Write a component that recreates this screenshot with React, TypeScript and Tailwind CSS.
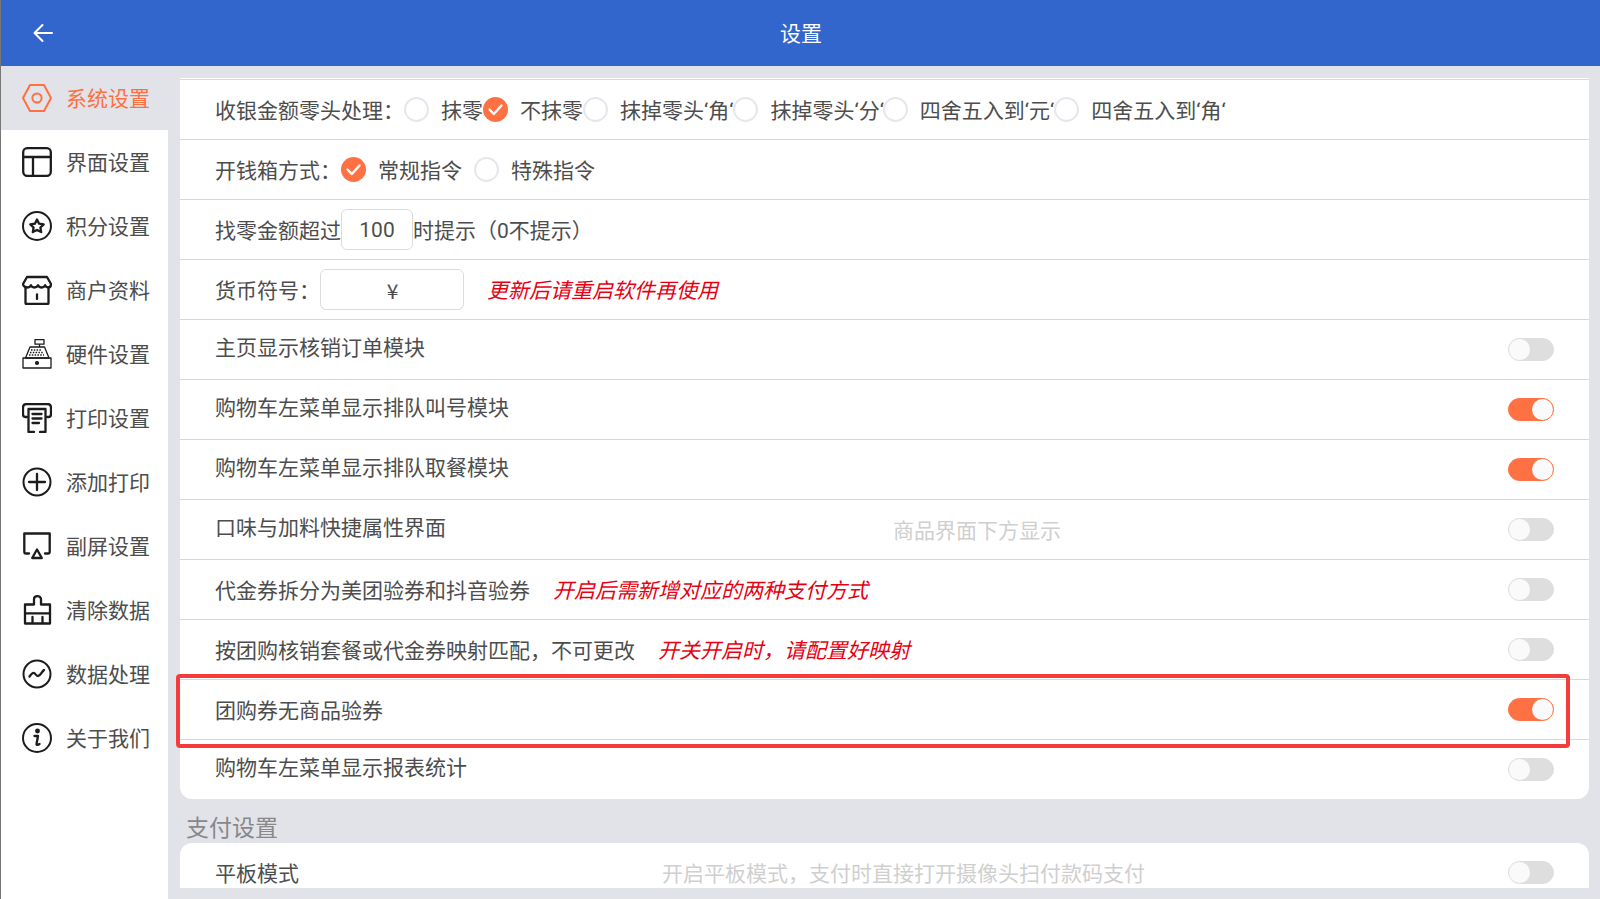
import type { ReactNode } from 'react'

const ink = { fill: 'none', stroke: '#1c1c1c', strokeWidth: 2.3, strokeLinecap: 'round', strokeLinejoin: 'round' } as const

const icons: Record<string, ReactNode> = {
  system: (
    <g fill="none" stroke="#ff7043" strokeWidth="2" strokeLinejoin="round">
      <path d="M8 2h14l7 13-7 13H8L1 15z" />
      <circle cx="15" cy="15" r="4.600" />
    </g>
  ),
  layout: (
    <g {...ink}>
      <rect x="1.200" y="1.200" width="27.600" height="27.600" rx="4" />
      <path d="M1.200 10h27.600M11 10v18.800" />
    </g>
  ),
  star: (
    <g {...ink}>
      <circle cx="15" cy="15" r="14" strokeWidth="2" />
      <path d="M15 8.500l2.100 4.200 4.600.6-3.300 3.200.8 4.600-4.200-2.200-4.200 2.200.8-4.600-3.300-3.200 4.600-.6z" />
    </g>
  ),
  shop: (
    <g {...ink}>
      <path d="M5 2h20l4 7c0 2-1.200 3.500-2.800 3.500-1.500 0-2.600-1-3.100-2.300-.5 1.300-1.700 2.300-3.300 2.300s-3.100-1-3.800-2.300c-.7 1.300-2.200 2.300-3.800 2.300s-2.800-1-3.300-2.300c-.5 1.300-1.600 2.300-3.100 2.300C3.200 12.500 1 11 1 9z" />
      <path d="M3.500 12.500V28c0 .6.400 1 1 1h21c.6 0 1-.4 1-1V12.500" />
      <path d="M15 19.500v4.500" />
    </g>
  ),
  register: (
    <g fill="none" stroke="#1c1c1c" strokeWidth="1.300" strokeLinejoin="round">
      <rect x="13" y="0.700" width="9" height="4.500" />
      <path d="M17.500 5.200V8M8 8h14.500l4.500 11H3.500z" />
      <rect x="1" y="19" width="28" height="10" />
      <path d="M9 11h11M8 13.500h13M7 16h15" strokeDasharray="1.500 1.300" />
      <circle cx="15" cy="24" r="1.400" fill="#1c1c1c" />
    </g>
  ),
  printer: (
    <g {...ink}>
      <path d="M5 14H3.500C1.800 14 1 13 1 11V4.500C1 2.300 2.300 1 4.500 1h21C27.700 1 29 2.300 29 4.500V11c0 2-.8 3-2.500 3H25" />
      <path d="M12 29H6.500V6h17v23H18" />
      <path d="M10.500 11h9M10.500 15.500h9M10.500 20h6.500" />
    </g>
  ),
  plus: (
    <g {...ink}>
      <circle cx="15" cy="15" r="13.500" strokeWidth="2" />
      <path d="M15 7v16M7 15h16" />
    </g>
  ),
  cast: (
    <g {...ink}>
      <path d="M7 22.500H4c-1 0-1.700-.7-1.700-1.700V2.500h25.400v18.300c0 1-.7 1.700-1.700 1.700h-3" />
      <path d="M15 18.500l4.800 8.500h-9.600z" />
    </g>
  ),
  broom: (
    <g {...ink}>
      <path d="M15.500 1.200c-1.800 0-3.500 1-3.500 3V9.500H3v8.800h25V9.500h-9V4.200c0-2-1.700-3-3.500-3z" />
      <path d="M3 18.300V28.500h25V18.300M10.500 22v6.500M20.500 22v6.500" />
    </g>
  ),
  chart: (
    <g {...ink}>
      <circle cx="15" cy="15" r="13.500" strokeWidth="2" />
      <path d="M7.500 17.500c1.500-2 3-4 4.500-3.500s2 3 4 3c2.500 0 3-3.500 6-6" />
    </g>
  ),
  info: (
    <g {...ink}>
      <circle cx="15" cy="15" r="14" strokeWidth="2" />
      <circle cx="15.500" cy="8" r="1.300" fill="#1c1c1c" />
      <path d="M12.500 13h3.500l-1.500 8c-.2 1.200 1.500 1.200 3 0" />
    </g>
  ),
}

const menu = [
  { key: 'system', label: '系统设置', active: true },
  { key: 'layout', label: '界面设置' },
  { key: 'star', label: '积分设置' },
  { key: 'shop', label: '商户资料' },
  { key: 'register', label: '硬件设置' },
  { key: 'printer', label: '打印设置' },
  { key: 'plus', label: '添加打印' },
  { key: 'cast', label: '副屏设置' },
  { key: 'broom', label: '清除数据' },
  { key: 'chart', label: '数据处理' },
  { key: 'info', label: '关于我们' },
]

function Radio({ checked = false, className = '' }: { checked?: boolean; className?: string }) {
  if (checked) {
    return (
      <svg viewBox="0 0 25 25" className={`h-[25px] w-[25px] shrink-0 ${className}`}>
        <circle cx="12.500" cy="12.500" r="12.500" fill="#ff7043" />
        <path d="M6.500 12.500l4.300 4.500 7.700-8.500" fill="none" stroke="#fff" strokeWidth="2.400" strokeLinecap="round" strokeLinejoin="round" />
      </svg>
    )
  }
  return <span className={`h-[25px] w-[25px] shrink-0 rounded-full border-2 border-[#e6e7ec] bg-white ${className}`} />
}

function Toggle({ on = false }: { on?: boolean }) {
  return (
    <span className={`ml-auto mr-[35px] flex h-[23px] w-[46px] shrink-0 rounded-full ${on ? 'justify-end border border-[#ff7043] bg-[#ff7043]' : 'border border-[#dedede] bg-[#dedede]'}`}>
      <span className="h-[21px] w-[21px] rounded-full bg-[#fafafa]" />
    </span>
  )
}

function Row({ children, last = false }: { children: ReactNode; last?: boolean }) {
  return (
    <div className={`flex items-center pl-[35px] ${last ? 'h-[59px]' : 'h-[60px] border-b border-[#d8d8d8]'}`}>
      {children}
    </div>
  )
}

function Red({ children, className = '' }: { children: ReactNode; className?: string }) {
  return <span className={`pt-[4px] italic text-[#e60012] ${className}`}>{children}</span>
}

const low = 'pt-[4px]'
const high = 'pb-[2px]'

export default function App() {
  return (
    <div className="relative h-[899px] overflow-hidden bg-[#e2e3e8] font-['Roboto','Noto_Sans_CJK_SC',sans-serif] text-[21px] leading-none text-[#4d4d4d]">
      <header className="relative flex h-[66px] items-center justify-center bg-[#3366cc] pl-[2px] pt-[2px] text-white">
        <svg viewBox="0 0 20 20" className="absolute left-[33px] top-[23px] h-[20px] w-[20px]" fill="none" stroke="#fff" strokeWidth="2" strokeLinecap="round" strokeLinejoin="round">
          <path d="M19 10H2M9.500 2L1.500 10l8 8" />
        </svg>
        设置
      </header>

      <div className="flex h-[833px]">
        <aside className="ml-px w-[167px] shrink-0 bg-white">
          {menu.map((m) => (
            <div key={m.key} className={`flex h-[64px] items-center gap-[14px] pl-[21px] ${m.active ? 'bg-[#e2e3e8] text-[#ff7043]' : ''}`}>
              <svg viewBox="0 0 30 30" className="h-[30px] w-[30px] shrink-0">{icons[m.key]}</svg>
              <span className="pt-[2px]">{m.label}</span>
            </div>
          ))}
        </aside>

        <main className="ml-[12px] mr-[11px] flex-1">
          <section className="mt-[12px] rounded-b-[12px] border-t border-white bg-white">
            <div className="border-t border-[#d8d8d8]" />
            <Row>
              <span className={low}>收银金额零头处理：</span>
              <Radio />
              <span className={`ml-[12px] ${low}`}>抹零</span>
              <Radio checked />
              <span className={`ml-[12px] ${low}`}>不抹零</span>
              <Radio />
              <span className={`ml-[12px] ${low}`}>抹掉零头‘角‘</span>
              <Radio />
              <span className={`ml-[12px] ${low}`}>抹掉零头‘分‘</span>
              <Radio className="-ml-px" />
              <span className={`ml-[12px] ${low}`}>四舍五入到‘元‘</span>
              <Radio />
              <span className={`ml-[12px] ${low}`}>四舍五入到‘角‘</span>
            </Row>
            <Row>
              <span className={low}>开钱箱方式：</span>
              <Radio checked />
              <span className={`ml-[12px] ${low}`}>常规指令</span>
              <Radio className="ml-[12px]" />
              <span className={`ml-[12px] ${low}`}>特殊指令</span>
            </Row>
            <Row>
              <span className={low}>找零金额超过</span>
              <span className="flex h-[41px] w-[72px] items-center justify-center rounded-[6px] border border-[#dcdcdc] pt-[2px]">100</span>
              <span className={low}>时提示（0不提示）</span>
            </Row>
            <Row>
              <span className={low}>货币符号：</span>
              <span className="flex h-[41px] w-[144px] items-center justify-center rounded-[6px] border border-[#dcdcdc] pl-[1px] pt-[2px] font-['Noto_Sans_CJK_SC',sans-serif]">¥</span>
              <Red className="ml-[23px]">更新后请重启软件再使用</Red>
            </Row>
            <Row>
              <span className={high}>主页显示核销订单模块</span>
              <Toggle />
            </Row>
            <Row>
              <span className={high}>购物车左菜单显示排队叫号模块</span>
              <Toggle on />
            </Row>
            <Row>
              <span className={high}>购物车左菜单显示排队取餐模块</span>
              <Toggle on />
            </Row>
            <Row>
              <span className={high}>口味与加料快捷属性界面</span>
              <span className={`flex-1 text-center text-[#cfcfcf] ${low}`}>商品界面下方显示</span>
              <Toggle />
            </Row>
            <Row>
              <span className={low}>代金券拆分为美团验券和抖音验券</span>
              <Red className="ml-[23px]">开启后需新增对应的两种支付方式</Red>
              <Toggle />
            </Row>
            <Row>
              <span className={low}>按团购核销套餐或代金券映射匹配，不可更改</span>
              <Red className="ml-[23px]">开关开启时，请配置好映射</Red>
              <Toggle />
            </Row>
            <Row>
              <span className={low}>团购券无商品验券</span>
              <Toggle on />
            </Row>
            <Row last>
              <span className="pb-[3px]">购物车左菜单显示报表统计</span>
              <Toggle />
            </Row>
          </section>

          <h2 className="ml-[6px] flex h-[44px] items-center pt-[14px] text-[23px] font-normal text-[#888888]">支付设置</h2>

          <section className="h-[45px] overflow-hidden rounded-t-[12px] bg-white">
            <Row last>
              <span className={low}>平板模式</span>
              <span className={`flex-1 text-center text-[#cfcfcf] ${low}`}>开启平板模式，支付时直接打开摄像头扫付款码支付</span>
              <Toggle />
            </Row>
          </section>
        </main>
      </div>

      <div className="absolute bottom-0 left-0 top-0 w-px bg-[#777777]" />
      <div className="pointer-events-none absolute left-[176px] top-[674px] h-[74px] w-[1394px] rounded-[4px] border-[4px] border-[#f43c3c]" />
    </div>
  )
}
